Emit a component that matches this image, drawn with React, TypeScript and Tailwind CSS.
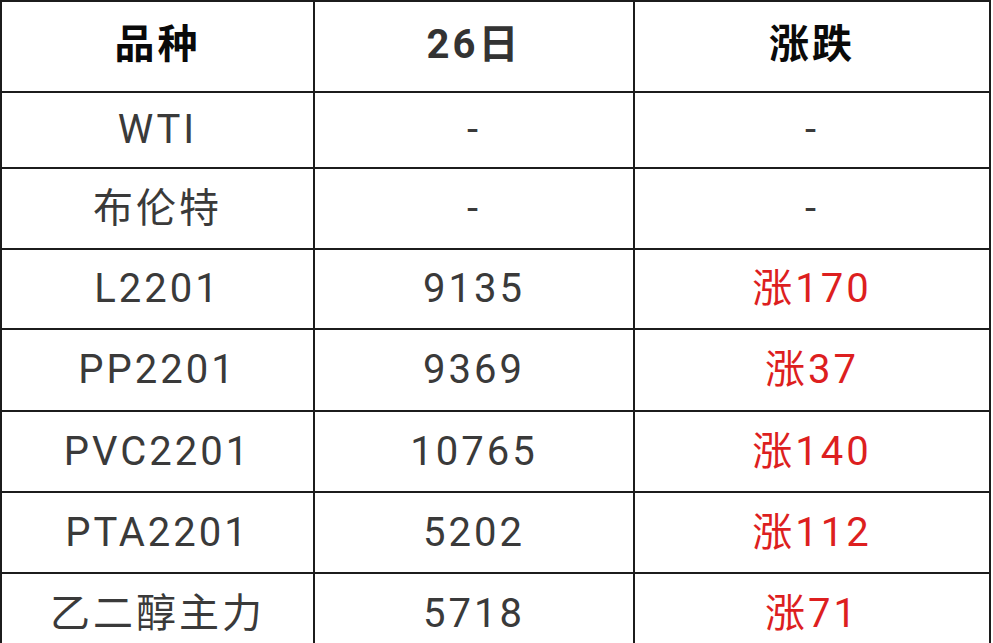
const rows: { name: string; price: string; change: string; up?: boolean; h: string }[] = [
  { name: "WTI", price: "-", change: "-", h: "h-[76px]" },
  { name: "布伦特", price: "-", change: "-", h: "h-[81px]" },
  { name: "L2201", price: "9135", change: "涨170", up: true, h: "h-[80px]" },
  { name: "PP2201", price: "9369", change: "涨37", up: true, h: "h-[82px]" },
  { name: "PVC2201", price: "10765", change: "涨140", up: true, h: "h-[81px]" },
  { name: "PTA2201", price: "5202", change: "涨112", up: true, h: "h-[81px]" },
  { name: "乙二醇主力", price: "5718", change: "涨71", up: true, h: "h-[81px]" },
]

const font = "font-['Roboto','Noto_Sans_CJK_SC',sans-serif]"

export default function App() {
  return (
    <div className="w-[993px] h-[643px] overflow-hidden bg-white">
      <div className={`w-[991px] border-t-2 border-l-2 border-[#1c1c1c] ${font} text-[40px] tracking-[3px]`}>
        <div className="flex h-[91px] border-b-2 border-[#1c1c1c] font-bold">
          <div className="w-[313px] border-r-2 border-[#1c1c1c] flex items-center justify-center text-[#0a0a0a] pb-1">品种</div>
          <div className="w-[320px] border-r-2 border-[#1c1c1c] flex items-center justify-center text-[#333] pb-1">26日</div>
          <div className="w-[356px] border-r-2 border-[#1c1c1c] flex items-center justify-center text-[#0a0a0a] pb-1">涨跌</div>
        </div>
        {rows.map((r) => (
          <div key={r.name} className={`flex ${r.h} border-b-2 border-[#1c1c1c] text-[#3a3a3a]`}>
            <div className="w-[313px] border-r-2 border-[#1c1c1c] flex items-center justify-center">{r.name}</div>
            <div className="w-[320px] border-r-2 border-[#1c1c1c] flex items-center justify-center">{r.price}</div>
            <div className={`w-[356px] border-r-2 border-[#1c1c1c] flex items-center justify-center ${r.up ? "text-[#dd1f1f]" : ""}`}>{r.change}</div>
          </div>
        ))}
      </div>
    </div>
  )
}
